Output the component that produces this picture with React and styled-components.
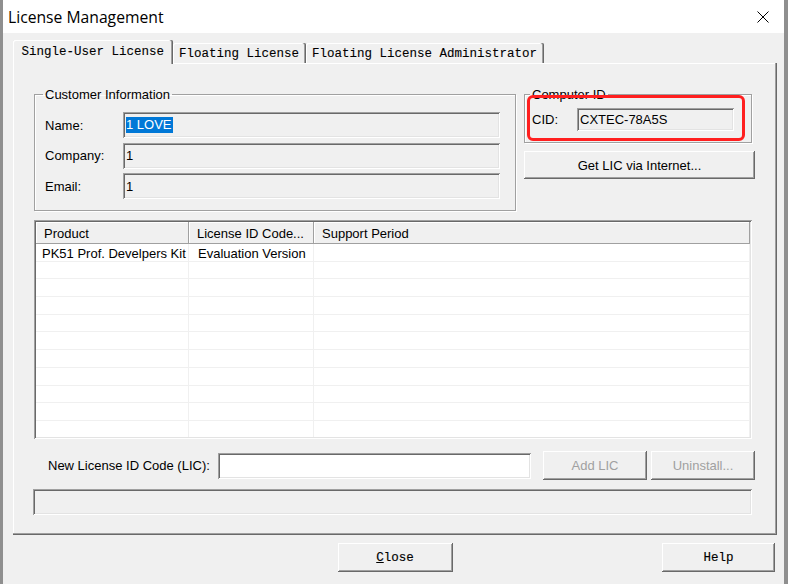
import React from 'react';
import styled, { createGlobalStyle } from 'styled-components';

const Global = createGlobalStyle`
  html, body { margin: 0; padding: 0; background: #ffffff; }
  body {
    width: 788px;
    height: 584px;
    overflow: hidden;
    font-family: "Liberation Sans", Arial, sans-serif;
    font-size: 13px;
    color: #000;
  }
  * { box-sizing: border-box; }
`;

const raised = `
  box-shadow: inset -1px -1px #696969, inset 1px 1px #ffffff,
    inset -2px -2px #a0a0a0, inset 2px 2px #f0f0f0;
`;
const sunken = `
  box-shadow: inset 1px 1px #a0a0a0, inset -1px -1px #ffffff,
    inset 2px 2px #696969, inset -2px -2px #e3e3e3;
`;

const Window = styled.div`
  width: 788px;
  height: 584px;
  display: flex;
  flex-direction: column;
  border-left: 3px solid #8f8f8f;
  border-right: 4px solid #8f8f8f;
  background: #f0f0f0;
`;

const TitleBar = styled.div`
  height: 33px;
  flex: none;
  background: #ffffff;
  display: flex;
  align-items: center;
  justify-content: space-between;
  padding-left: 5px;
`;

const Title = styled.span`
  font-family: "Open Sans", "Noto Sans", sans-serif;
  font-size: 15.7px;
  color: #000;
`;

const CloseBox = styled.div`
  width: 42px;
  height: 33px;
  display: flex;
  align-items: center;
  justify-content: center;
`;

const Body = styled.div`
  flex: 1;
  display: flex;
  flex-direction: column;
  padding: 7px 7px 0 10px;
`;

const TabRow = styled.div`
  display: flex;
  align-items: flex-end;
  height: 23px;
  position: relative;
  z-index: 1;
`;

const Tab = styled.div`
  height: ${(p) => (p.$active ? '24px' : '20px')};
  margin-bottom: ${(p) => (p.$active ? '-1px' : '0')};
  padding: 0 ${(p) => (p.$active ? '8.5px' : '6.5px')};
  padding-top: ${(p) => (p.$active ? '0' : '1px')};
  display: flex;
  align-items: center;
  font-family: "Liberation Mono", "Courier New", monospace;
  font-size: 12.5px;
  -webkit-text-stroke: 0.1px #000;
  white-space: nowrap;
  background: #f0f0f0;
  border-radius: 2px 2px 0 0;
  box-shadow: inset -1px 0 #696969, inset -2px 0 #a0a0a0, inset 1px 1px #ffffff;
`;

const Panel = styled.div`
  height: 472px;
  flex: none;
  display: flex;
  flex-direction: column;
  padding: 24px 22px 0 21px;
  box-shadow: inset -1px -1px #696969, inset -2px -2px #a0a0a0, inset 1px 1px #ffffff;
`;

const TopSection = styled.div`
  display: flex;
  gap: 8px;
`;

const Group = styled.fieldset`
  margin: 0;
  min-width: 0;
  width: ${(p) => p.$w}px;
  height: ${(p) => p.$h}px;
  padding: 0 ${(p) => p.$pr}px 0 ${(p) => p.$pl}px;
  border: 1px solid #a0a0a0;
  box-shadow: inset 1px 1px #ffffff, 1px 1px #ffffff;
`;

const Legend = styled.legend`
  padding: 0 2px;
  margin-left: -2px;
  font-size: 13px;
  line-height: 15px;
  color: #000;
`;

const FieldGrid = styled.div`
  display: grid;
  grid-template-columns: 78px 1fr;
  grid-auto-rows: 26px;
  row-gap: 4.5px;
  margin-top: 10px;
  align-items: center;
`;

const Label = styled.span`
  font-size: 13px;
  white-space: nowrap;
`;

const TextBox = styled.div`
  height: ${(p) => p.$h || 26}px;
  width: ${(p) => (p.$w ? `${p.$w}px` : 'auto')};
  flex: none;
  display: flex;
  align-items: center;
  padding-left: 3px;
  font-size: 13px;
  background: ${(p) => (p.$white ? '#ffffff' : '#f0f0f0')};
  ${sunken}
`;

const Selected = styled.span`
  background: #0078d7;
  color: #ffffff;
  line-height: 16px;
  padding-right: 1px;
`;

const RightCol = styled.div`
  width: 231px;
  display: flex;
  flex-direction: column;
  position: relative;
`;

const CidRow = styled.div`
  display: flex;
  align-items: center;
  margin-top: 6px;
`;

const CidLabel = styled.span`
  width: 45px;
  font-size: 13px;
`;

const Button = styled.div`
  height: ${(p) => p.$h || 29}px;
  width: ${(p) => p.$w}px;
  flex: none;
  display: flex;
  align-items: center;
  justify-content: center;
  background: #f0f0f0;
  font-size: 13px;
  color: ${(p) => (p.$disabled ? '#a0a0a0' : '#000')};
  ${raised}
`;

const MonoButton = styled(Button)`
  font-family: "Liberation Mono", "Courier New", monospace;
  font-size: 12.5px;
  -webkit-text-stroke: 0.15px #000;
  padding-top: 1px;
`;

const RedMark = styled.div`
  position: absolute;
  left: 3px;
  top: 8px;
  width: 218px;
  height: 46px;
  border: 3px solid #ff1f1f;
  border-radius: 6px;
  pointer-events: none;
`;

const List = styled.div`
  margin-top: 9px;
  width: 718px;
  height: 219px;
  flex: none;
  background: #ffffff;
  padding: 2px;
  overflow: hidden;
  ${sunken}
`;

const ListInner = styled.div`
  height: 100%;
  overflow: hidden;
`;

const HeaderRow = styled.div`
  display: grid;
  grid-template-columns: 153px 125px 1fr;
  height: 22px;
`;

const HeaderCell = styled.div`
  display: flex;
  align-items: center;
  padding-left: 8px;
  background: #f0f0f0;
  font-size: 13px;
  white-space: nowrap;
  box-shadow: inset -1px -1px #a0a0a0, inset 1px 1px #ffffff;
`;

const Row = styled.div`
  display: grid;
  grid-template-columns: 153px 125px 1fr;
  height: 17.7px;
  border-bottom: 1px solid #f0f0f0;
`;

const Cell = styled.div`
  display: flex;
  align-items: center;
  padding-top: 2px;
  padding-left: ${(p) => (p.$first ? 6 : 9)}px;
  border-right: 1px solid #f0f0f0;
  font-size: 13px;
  white-space: nowrap;
  overflow: hidden;
`;

const LicRow = styled.div`
  margin-top: 12px;
  height: 29px;
  display: flex;
  align-items: center;
`;

const LicLabel = styled.span`
  width: 184px;
  flex: none;
  padding-left: 14px;
  font-size: 13px;
  white-space: nowrap;
`;

const StatusBar = styled.div`
  margin-top: 9px;
  margin-left: -1px;
  width: 719px;
  height: 26px;
  background: #f0f0f0;
  ${sunken}
`;

const FooterRow = styled.div`
  margin-top: 8px;
  display: grid;
  grid-template-columns: 1fr auto 1fr;
  align-items: center;
`;

const FooterRight = styled.div`
  display: flex;
  justify-content: flex-end;
  padding-right: 2px;
`;

const rows = Array.from({ length: 11 });

export default function App() {
  return (
    <>
      <Global />
      <Window>
        <TitleBar>
          <Title>License Management</Title>
          <CloseBox>
            <svg width="12" height="12" viewBox="0 0 12 12">
              <path d="M0.5 0.5 L11.5 11.5 M11.5 0.5 L0.5 11.5" stroke="#000" strokeWidth="1" fill="none" />
            </svg>
          </CloseBox>
        </TitleBar>
        <Body>
          <TabRow>
            <Tab $active>Single-User License</Tab>
            <Tab>Floating License</Tab>
            <Tab>Floating License Administrator</Tab>
          </TabRow>
          <Panel>
            <TopSection>
              <Group $w={482} $h={124} $pl={10} $pr={15}>
                <Legend>Customer Information</Legend>
                <FieldGrid>
                  <Label>Name:</Label>
                  <TextBox>
                    <Selected>1 LOVE</Selected>
                  </TextBox>
                  <Label>Company:</Label>
                  <TextBox>1</TextBox>
                  <Label>Email:</Label>
                  <TextBox>1</TextBox>
                </FieldGrid>
              </Group>
              <RightCol>
                <Group $w={228} $h={56} $pl={7} $pr={17}>
                  <Legend>Computer ID</Legend>
                  <CidRow>
                    <CidLabel>CID:</CidLabel>
                    <TextBox $h={23} $w={157}>CXTEC-78A5S</TextBox>
                  </CidRow>
                </Group>
                <RedMark />
                <Button $w={231} $h={28} style={{ marginTop: 8 }}>Get LIC via Internet...</Button>
              </RightCol>
            </TopSection>
            <List>
              <ListInner>
                <HeaderRow>
                  <HeaderCell>Product</HeaderCell>
                  <HeaderCell>License ID Code...</HeaderCell>
                  <HeaderCell>Support Period</HeaderCell>
                </HeaderRow>
                {rows.map((_, i) => (
                  <Row key={i}>
                    <Cell $first>{i === 0 ? 'PK51 Prof. Develpers Kit' : ''}</Cell>
                    <Cell>{i === 0 ? 'Evaluation Version' : ''}</Cell>
                    <Cell />
                  </Row>
                ))}
              </ListInner>
            </List>
            <LicRow>
              <LicLabel>New License ID Code (LIC):</LicLabel>
              <TextBox $white $w={313} />
              <Button $w={104} $disabled style={{ marginLeft: 12 }}>Add LIC</Button>
              <Button $w={104} $disabled style={{ marginLeft: 4 }}>Uninstall...</Button>
            </LicRow>
            <StatusBar />
          </Panel>
          <FooterRow>
            <span />
            <MonoButton $w={115}><u>C</u>lose</MonoButton>
            <FooterRight>
              <MonoButton $w={113}>Help</MonoButton>
            </FooterRight>
          </FooterRow>
        </Body>
      </Window>
    </>
  );
}
